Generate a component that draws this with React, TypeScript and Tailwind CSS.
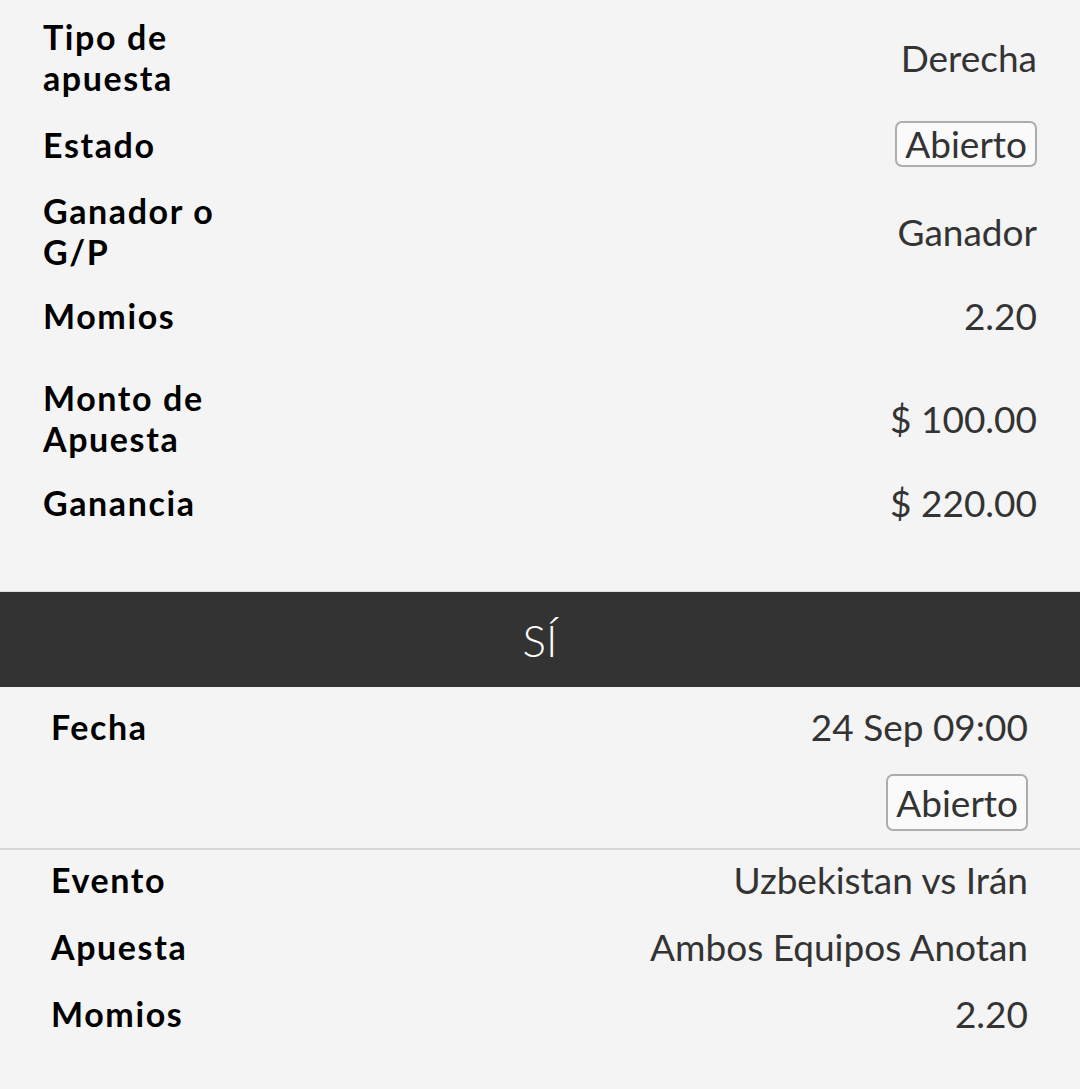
import React from "react";

const Row = ({ label, children, className = "" }: { label: React.ReactNode; children?: React.ReactNode; className?: string }) => (
  <div className={`flex items-center justify-between ${className}`}>
    <div className="w-[225px] text-[34px] font-bold leading-[41px] tracking-[1.6px] text-black">{label}</div>
    <div className="text-[37px] leading-[41px] text-[#333333]">{children}</div>
  </div>
);

export default function App() {
  return (
    <div className="min-h-[1089px] w-[1080px] bg-[#f4f4f4] font-['Lato',sans-serif]">
      <section className="flex flex-col gap-[23px] pb-[68px] pl-[43px] pr-[43px] pt-[16px]">
        <Row label={<>Tipo de<br />apuesta</>}>Derecha</Row>
        <Row label="Estado">
          <span className="block rounded-[7px] border-2 border-[#adadad] bg-[#fafafa] px-[8px] py-[1px] leading-[40px]">Abierto</span>
        </Row>
        <Row label={<>Ganador o<br />G/P</>}>Ganador</Row>
        <Row label="Momios" className="mb-[18px]">2.20</Row>
        <Row label={<>Monto de<br />Apuesta</>}>$ 100.00</Row>
        <Row label="Ganancia">$ 220.00</Row>
      </section>
      <div className="flex h-[96px] items-center justify-center border-t border-[#e0e0e0] bg-[#333333]">
        <span className="text-[44px] font-light leading-none text-white">SÍ</span>
      </div>
      <section className="pl-[51px] pr-[52px] pt-[19px]">
        <Row label="Fecha">24 Sep 09:00</Row>
        <div className="mt-[27px] flex justify-end">
          <span className="block rounded-[7px] border-2 border-[#adadad] bg-[#fafafa] px-[8px] py-[6px] text-[37px] leading-[41px] text-[#333333]">Abierto</span>
        </div>
      </section>
      <div className="mt-[17px] h-[2px] bg-[#d9d9d9]" />
      <section className="flex flex-col gap-[26px] pl-[51px] pr-[52px] pt-[9px]">
        <Row label="Evento">Uzbekistan vs Irán</Row>
        <Row label="Apuesta"><span className="whitespace-nowrap">Ambos Equipos Anotan</span></Row>
        <Row label="Momios">2.20</Row>
      </section>
    </div>
  );
}
